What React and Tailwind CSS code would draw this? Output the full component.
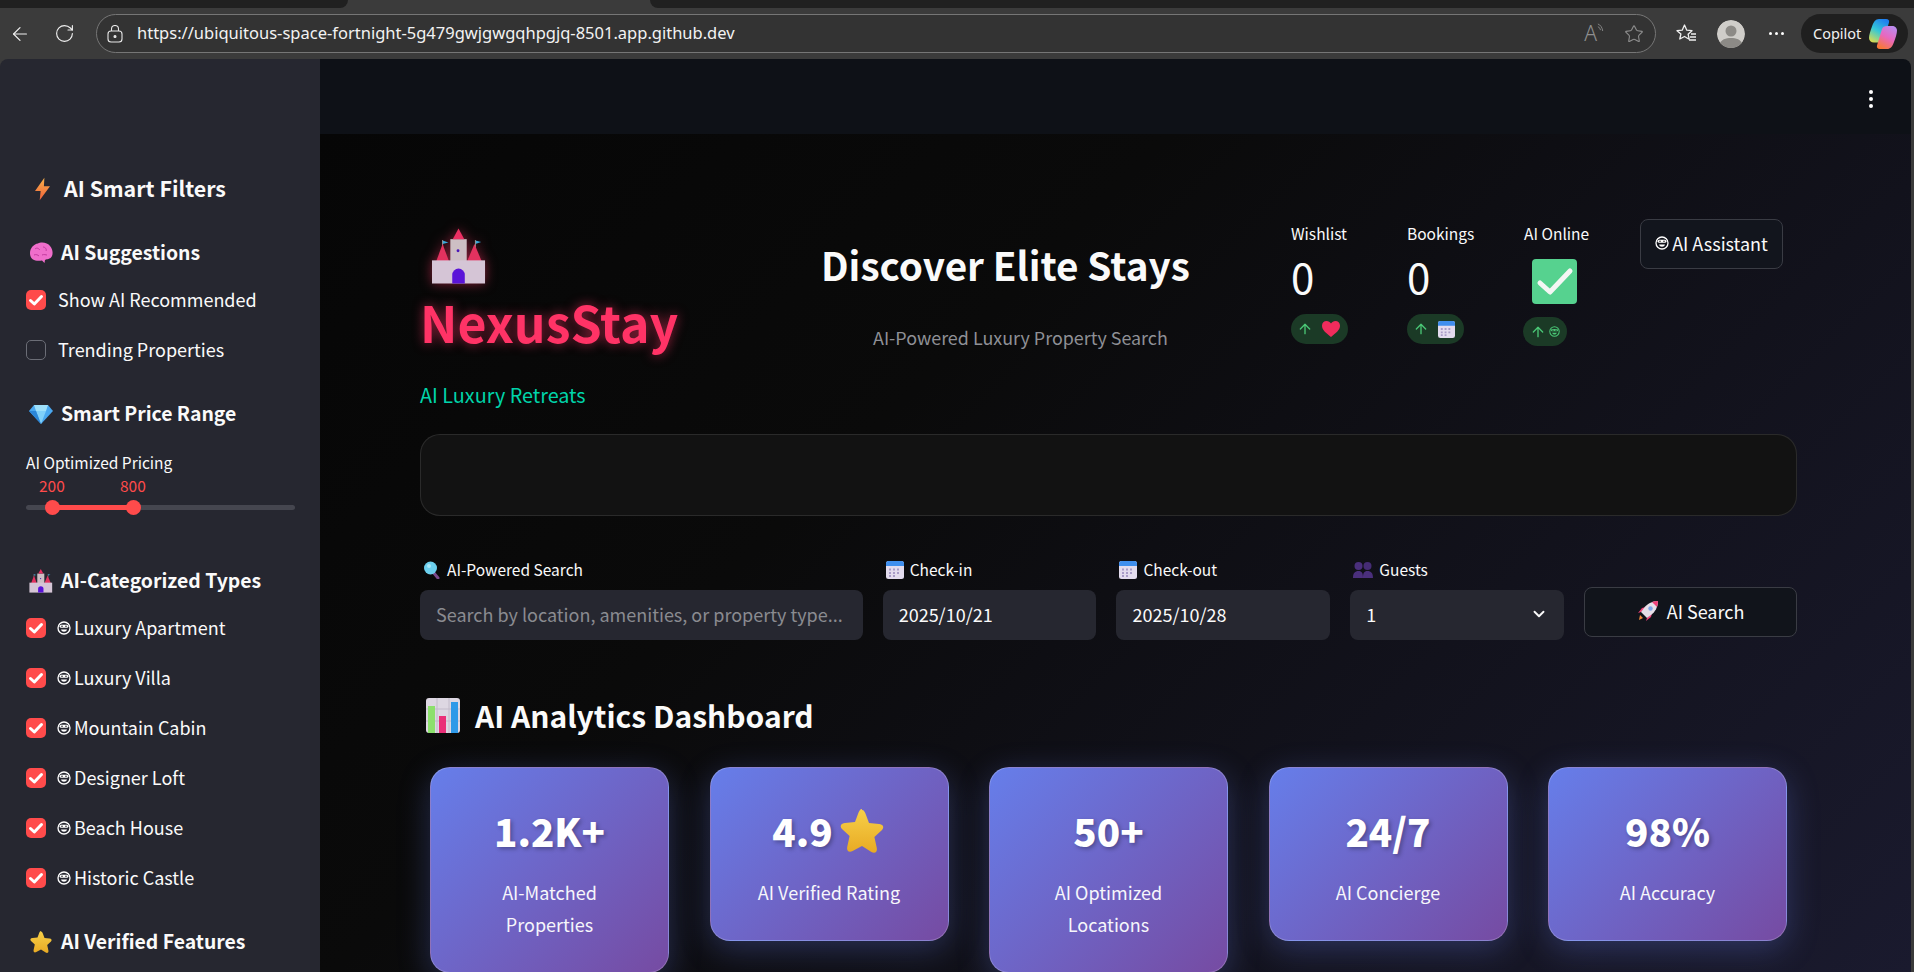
import React from 'react';
import { ArrowLeft, RotateCw, ChevronDown, Star, ArrowUp } from 'lucide-react';

const Bot = ({ className = 'w-[14px] h-[14px]', color = '#fff' }) => (
  <svg viewBox="0 0 14 14" className={className}>
    <circle cx="7" cy="7" r="6" fill="none" stroke={color} strokeWidth="1.3" />
    <rect x="2.6" y="3.8" width="8.8" height="3" rx="1.5" fill={color} />
    <circle cx="5" cy="5.3" r=".8" fill="#222" />
    <circle cx="9" cy="5.3" r=".8" fill="#222" />
    <path d="M4 8.6h6c-.4 1.5-1.6 2.2-3 2.2s-2.6-.7-3-2.2z" fill={color} />
  </svg>
);

const Castle = ({ className }) => (
  <svg viewBox="0 0 56 58" className={className}>
    <path d="M11 16l6-1.5-6-2z" fill="#38a9dc" />
    <path d="M45 16l6-2-6-1.500z" fill="#38a9dc" />
    <rect x="10.500" y="12" width="1" height="8" fill="#999" />
    <rect x="44.500" y="12" width="1" height="8" fill="#999" />
    <rect x="19" y="11" width="17" height="34" fill="#cdbfc4" />
    <path d="M27.500 0l6 11h-12z" fill="#ec2f63" />
    <path d="M11 16l7 19H4z" fill="#e2325f" />
    <path d="M44 16l8 19H36z" fill="#e2325f" />
    <rect x="0" y="33" width="55" height="24" fill="#d5c5d6" />
    <path d="M13 57v-9a6 6 0 0 1 13 0v9z" transform="translate(8 0)" fill="#5a14d8" />
    <circle cx="27" cy="23" r="1.500" fill="#4a16b8" />
  </svg>
);

const Bolt = ({ className }) => (
  <svg viewBox="0 0 16 24" className={className}>
    <defs>
      <linearGradient id="bolt" x1="0" y1="0" x2="0" y2="1">
        <stop offset="0" stopColor="#f9b24a" />
        <stop offset="1" stopColor="#f0603a" />
      </linearGradient>
    </defs>
    <path d="M10 0L0 14h6L5 24 16 9h-6.500z" fill="url(#bolt)" />
  </svg>
);

const Brain = ({ className }) => (
  <svg viewBox="0 0 24 22" className={className}>
    <path d="M1 11c0-5 4-9 8-9.500C12-.5 19 .5 21 4c3 3 3.500 9 1 11.500-2 2-5 1.500-6 2.500l-.5 3-2.500-2.500c-3 .5-7 .5-9-1C2 16 1 14 1 11z" fill="#f06ecb" />
    <path d="M6 7c2-2 4 0 5 1M14 5c2 0 4 2 3 4M5 13c2-1 4 0 5 1M13 13c2-1 4 0 5 0" stroke="#c23a9e" strokeWidth="1" fill="none" />
  </svg>
);

const Gem = ({ className }) => (
  <svg viewBox="0 0 24 20" className={className}>
    <path d="M5 1h14l5 6-12 13L0 7z" fill="#4aa8f0" />
    <path d="M7 7h10l-5 13z" fill="#7fd0fa" />
    <path d="M5 1l2 6h10l2-6z" fill="#9ee0fb" />
    <path d="M0 7h7l5 13z" fill="#2b86d8" />
  </svg>
);

const StarEmoji = ({ className }) => (
  <svg viewBox="0 0 24 24" className={className}>
    <defs>
      <linearGradient id="star" x1="0" y1="0" x2="0" y2="1">
        <stop offset="0" stopColor="#f7d048" />
        <stop offset="1" stopColor="#e8aa24" />
      </linearGradient>
    </defs>
    <path d="M12 1.500c1 0 1.500 1 2 2.500l1.500 4 5 .5c2 .2 2.800 1.500 1.500 3l-3.800 3.500 1.200 5.500c.4 2-1 3-2.700 2L12 19.500l-4.700 2.500c-1.700 1-3.100 0-2.700-2l1.200-5.500L2 11c-1.300-1.500-.5-2.800 1.500-3l5-.5 1.500-4c.5-1.500 1-2.500 2-2.500z" fill="url(#star)" />
  </svg>
);

const Calendar = ({ className }) => (
  <svg viewBox="0 0 18 18" className={className}>
    <rect x="0" y="0" width="18" height="18" rx="2.500" fill="#e3dcee" />
    <path d="M0 5V2.500A2.500 2.500 0 0 1 2.500 0h13A2.500 2.500 0 0 1 18 2.500V5z" fill="#3f8fee" />
    <path d="M3 7.500h2v2H3zM7 7.500h2v2H7zM11 7.500h2v2h-2zM3 11h2v2H3zM7 11h2v2H7zM11 11h2v2h-2zM3 14h2v2H3zM7 14h2v2H7z" fill="#a99cc8" />
  </svg>
);

const Magnifier = ({ className }) => (
  <svg viewBox="0 0 18 18" className={className}>
    <path d="M10 11l5 6" stroke="#7a4a8c" strokeWidth="3" strokeLinecap="round" />
    <circle cx="7.500" cy="7" r="6.500" fill="#6cd0ee" />
    <circle cx="6" cy="5" r="2" fill="#a8e8f8" />
  </svg>
);

const People = ({ className }) => (
  <svg viewBox="0 0 20 18" className={className}>
    <circle cx="5.500" cy="5" r="4" fill="#4a2f7c" />
    <circle cx="14.500" cy="5" r="4" fill="#452c74" />
    <path d="M0 17c0-5 2-7 5.500-7S10 12 10 17zM10 17c0-5 1-7 4.500-7S20 12 20 17z" fill="#4a2f7c" />
  </svg>
);

const Rocket = ({ className }) => (
  <svg viewBox="0 0 22 22" className={className}>
    <path d="M2 20l1-5 3 3z" fill="#f0883a" />
    <path d="M4 12L1 13l4-5 4-1zM10 18l-1 3 5-4 1-4z" fill="#f03f78" />
    <path d="M21 1c-6 0-11 3-14 7l-3 4 6 6 4-3c4-3 7-8 7-14z" fill="#e6dfe8" />
    <path d="M21 1c-2 0-4 .5-6 1l5 5c.5-2 1-4 1-6z" fill="#f03f78" />
    <circle cx="13.500" cy="8.500" r="2.200" fill="#7ea6e8" />
  </svg>
);

const ChartEmoji = ({ className }) => (
  <svg viewBox="0 0 34 35" className={className}>
    <rect width="34" height="35" rx="3" fill="#ddd7e2" />
    <path d="M11 0v35M23 0v35M0 11h34M0 23h34" stroke="#c2bbca" strokeWidth="1" />
    <rect x="2" y="8" width="7" height="27" fill="#8ce06c" />
    <rect x="13" y="18" width="7" height="17" fill="#ea2f78" />
    <rect x="25" y="4" width="7" height="31" fill="#2f9ae8" />
  </svg>
);

const Heart = ({ className }) => (
  <svg viewBox="0 0 18 16" className={className}>
    <path d="M9 16C4 12 0 9 0 4.800 0 2 2 0 4.600 0 6.400 0 8 1 9 2.500 10 1 11.600 0 13.400 0 16 0 18 2 18 4.800 18 9 14 12 9 16z" fill="#f02c5c" />
  </svg>
);

const BoxCheck = ({ className }) => (
  <svg viewBox="0 0 45 45" className={className}>
    <rect width="45" height="45" rx="4" fill="#56d28f" />
    <path d="M8 24l10 9L38 12" fill="none" stroke="#f4f6f4" strokeWidth="5" strokeLinecap="round" strokeLinejoin="round" />
  </svg>
);

const CopilotLogo = () => (
  <svg viewBox="0 0 28 30" className="w-[28px] h-[30px]">
    <defs>
      <linearGradient id="cp1" x1="0.700" y1="0" x2="0.200" y2="1">
        <stop offset="0" stopColor="#1f7ff0" />
        <stop offset="0.500" stopColor="#35c8d8" />
        <stop offset="1" stopColor="#d8dc50" />
      </linearGradient>
      <linearGradient id="cp2" x1="0.800" y1="0" x2="0.300" y2="1">
        <stop offset="0" stopColor="#b88cf0" />
        <stop offset="0.500" stopColor="#e868c0" />
        <stop offset="1" stopColor="#f87838" />
      </linearGradient>
    </defs>
    <path d="M10 0h7c2.500 0 3.500 1.500 3 3.500L15 20c-.6 2-2 3.500-4.500 3.500H5c-3 0-5-2-5-4.500 0-3 1.500-7.500 3-11.500C4.500 3 6.500 0 10 0z" fill="url(#cp1)" />
    <path d="M18 7h5c3 0 5 2 5 4.500 0 3-1.500 7.500-3 11.500-1.500 4.500-3.500 7-7 7h-7c-2.500 0-3.500-1.500-3-3.500L13 10c.5-2 2.500-3 5-3z" fill="url(#cp2)" />
  </svg>
);

const Box = ({ checked }) =>
  checked ? (
    <span className="w-5 h-5 rounded-[5px] bg-[#ff4b4b] flex items-center justify-center shrink-0">
      <svg viewBox="0 0 16 16" className="w-[16px] h-[16px]">
        <path d="M2.500 8.500l3.800 3.500 7.200-7.500" fill="none" stroke="#fff" strokeWidth="3" strokeLinecap="round" strokeLinejoin="round" />
      </svg>
    </span>
  ) : (
    <span className="w-5 h-5 rounded-[5px] border border-[#6b6d76] shrink-0" />
  );

const SideHeading = ({ icon, children, className }) => (
  <div className={`flex items-center h-7 text-[19.400px] font-semibold text-[#fafafa] ${className}`}>
    <span className="w-[35px] pl-[3px] shrink-0 flex">{icon}</span>
    <span className="-translate-y-px">{children}</span>
  </div>
);

const Option = ({ checked, bot, children }) => (
  <div className="flex items-center h-5 text-[18px] text-[#fafafa]">
    <Box checked={checked} />
    {bot ? (
      <span className="ml-[11px] mr-[3px]">
        <Bot />
      </span>
    ) : (
      <span className="w-3" />
    )}
    <span className="-translate-y-px">{children}</span>
  </div>
);

function Sidebar() {
  const types = ['Luxury Apartment', 'Luxury Villa', 'Mountain Cabin', 'Designer Loft', 'Beach House', 'Historic Castle'];
  return (
    <aside className="w-[320px] shrink-0 bg-[#262730] pl-[26px] pr-[25px] pt-[116px] rounded-tl-lg">
      <div className="flex items-center h-7 text-[21.400px] font-semibold text-[#fafafa] pl-[9px]">
        <Bolt className="w-[15px] h-6 mr-[14px]" />
        <span className="-translate-y-px">AI Smart Filters</span>
      </div>
      <SideHeading className="mt-[36px]" icon={<Brain className="w-[24px] h-[22px]" />}>
        AI Suggestions
      </SideHeading>
      <div className="mt-[23px] flex flex-col gap-[30px]">
        <Option checked>Show AI Recommended</Option>
        <Option>Trending Properties</Option>
      </div>
      <SideHeading className="mt-[40px]" icon={<Gem className="w-[24px] h-5" />}>
        Smart Price Range
      </SideHeading>
      <div className="mt-[24px] text-[15.500px] leading-5 text-[#fafafa]">AI Optimized Pricing</div>
      <div className="relative h-[39px] mt-px">
        <span className="absolute left-[13px] top-[4px] text-[15.500px] leading-4 text-[#ff4b4b]">200</span>
        <span className="absolute left-[94px] top-[4px] text-[15.500px] leading-4 text-[#ff4b4b]">800</span>
        <div className="absolute left-0 right-0 top-[32px] h-[5px] rounded-full bg-[#45464f]" />
        <div className="absolute left-[27px] w-[81px] top-[32px] h-[5px] bg-[#ff4b4b]" />
        <div className="absolute left-[19px] top-[27px] w-[15px] h-[15px] rounded-full bg-[#ff4b4b]" />
        <div className="absolute left-[100px] top-[27px] w-[15px] h-[15px] rounded-full bg-[#ff4b4b]" />
      </div>
      <SideHeading className="mt-[55px]" icon={<Castle className="w-[24px] h-[24px]" />}>
        AI-Categorized Types
      </SideHeading>
      <div className="mt-[23px] flex flex-col gap-[30px]">
        {types.map((t) => (
          <Option checked bot key={t}>
            {t}
          </Option>
        ))}
      </div>
      <SideHeading className="mt-[40px]" icon={<StarEmoji className="w-[24px] h-[24px]" />}>
        AI Verified Features
      </SideHeading>
    </aside>
  );
}

const Metric = ({ label, value, badge }) => (
  <div className="w-[116px] shrink-0 pt-[4px]">
    <div className="text-[15.500px] leading-5 text-[#fafafa]">{label}</div>
    {value}
    {badge}
  </div>
);

const Pill = ({ children, className }) => (
  <div className={`inline-flex items-center rounded-full bg-[#1b3a26] text-[#4ac776] ${className}`}>
    <ArrowUp className="w-[16px] h-[16px]" strokeWidth={2} />
    {children}
  </div>
);

function Hero() {
  return (
    <div className="flex h-[215px]">
      <div className="w-[402px] shrink-0">
        <div className="pt-[9px] pl-[12px]">
          <Castle className="w-[54px] h-[57px] [filter:drop-shadow(0_0_6px_rgba(255,51,102,0.5))]" />
        </div>
        <div className="text-[50px] leading-[64px] font-bold text-[#ff3366] mt-[4px] [text-shadow:0_0_12px_rgba(255,51,102,0.6)]">
          NexusStay
        </div>
        <div className="text-[19.800px] leading-6 text-[#00d4aa] mt-[30px]">AI Luxury Retreats</div>
      </div>
      <div className="w-[469px] shrink-0">
        <div className="text-[38.700px] leading-[48px] font-semibold text-[#fafafa] mt-[21px] -ml-px">Discover Elite Stays</div>
        <div className="text-[17.900px] leading-6 text-[#8f9096] mt-[37px] ml-[51px]">AI-Powered Luxury Property Search</div>
      </div>
      <Metric
        label="Wishlist"
        value={<div className="text-[42px] leading-[46px] text-[#fafafa] mt-[10px]">0</div>}
        badge={
          <Pill className="w-[57px] h-[30px] mt-[15px] pl-[6px] gap-[9px]">
            <Heart className="w-[18px] h-[16px]" />
          </Pill>
        }
      />
      <Metric
        label="Bookings"
        value={<div className="text-[42px] leading-[46px] text-[#fafafa] mt-[10px]">0</div>}
        badge={
          <Pill className="w-[57px] h-[30px] mt-[15px] pl-[6px] gap-[9px]">
            <Calendar className="w-[17px] h-[17px]" />
          </Pill>
        }
      />
      <div className="w-[117px] shrink-0 pt-[4px] pl-px">
        <div className="text-[15.500px] leading-5 text-[#fafafa]">AI Online</div>
        <BoxCheck className="w-[45px] h-[45px] ml-[8px] mt-[16px]" />
        <Pill className="w-[44px] h-[29px] mt-[13px] -ml-px pl-[7px] gap-[3px]">
          <Bot className="w-[11px] h-[11px]" color="#4ac776" />
        </Pill>
      </div>
      <div className="h-[50px] w-[143px] rounded-lg border border-[#3a3c44] bg-[#12151d] flex items-center justify-center gap-[3px] text-[18px] pb-[2px] text-[#fafafa]">
        <Bot />
        AI Assistant
      </div>
    </div>
  );
}

const Field = ({ label, icon, className, children }) => (
  <div className={className}>
    <div className="flex items-center h-5 gap-[6px] text-[15.500px] text-[#fafafa] mb-[10px] pl-[3px]">
      {icon}
      {label}
    </div>
    <div className="h-[50px] rounded-lg bg-[#262730] flex items-center justify-between px-4 pb-[2px] text-[18px] text-[#fafafa]">
      {children}
    </div>
  </div>
);

const stats = [
  { value: '1.2K+', label: ['AI-Matched', 'Properties'] },
  { value: '4.9', star: true, label: ['AI Verified Rating'] },
  { value: '50+', label: ['AI Optimized', 'Locations'] },
  { value: '24/7', label: ['AI Concierge'] },
  { value: '98%', label: ['AI Accuracy'] },
];

function StatCard({ stat }) {
  return (
    <div className="w-[239px] shrink-0 self-start rounded-[20px] border border-white/20 bg-linear-[135deg,#667eea,#764ba2] text-center text-white pt-[28px] pb-[32px] shadow-[0_8px_32px_rgba(102,126,234,0.3)]">
      <div className="flex items-center justify-center gap-[5px] h-[70px] text-[38.500px] font-black [text-shadow:2px_2px_4px_rgba(0,0,0,0.3)]">
        {stat.value}
        {stat.star && <StarEmoji className="w-[48px] h-[48px]" />}
      </div>
      <div className="text-[18px] leading-[32px] mt-[10px] text-[#f6f6fb]">
        {stat.label.map((l) => (
          <div key={l}>{l}</div>
        ))}
      </div>
    </div>
  );
}

function Main() {
  return (
    <main className="flex-1 min-w-0 flex flex-col bg-[#0e1117] rounded-tr-lg overflow-hidden">
      <div className="h-[75px] shrink-0 flex justify-end pr-[38px] pt-[31px]">
        <div className="flex flex-col gap-[3px]">
          <span className="w-[4px] h-[4px] rounded-full bg-white" />
          <span className="w-[4px] h-[4px] rounded-full bg-white" />
          <span className="w-[4px] h-[4px] rounded-full bg-white" />
        </div>
      </div>
      <div className="flex-1 min-h-0 pl-[100px] pr-[114px] pt-[85px] bg-linear-[135deg,#060606_0%,#0a0a0a_35%,#1a1a2e_100%]">
        <Hero />
        <div className="h-[82px] rounded-[20px] border border-white/10 bg-[#121212]" />
        <div className="flex gap-[20px] mt-[44px] items-start">
          <Field className="w-[443px]" label="AI-Powered Search" icon={<Magnifier className="w-[18px] h-[18px]" />}>
            <span className="text-[#8a8b90] whitespace-nowrap">Search by location, amenities, or property type...</span>
          </Field>
          <Field className="w-[214px]" label="Check-in" icon={<Calendar className="w-[18px] h-[18px]" />}>
            2025/10/21
          </Field>
          <Field className="w-[214px]" label="Check-out" icon={<Calendar className="w-[18px] h-[18px]" />}>
            2025/10/28
          </Field>
          <Field className="w-[214px]" label="Guests" icon={<People className="w-[20px] h-[18px]" />}>
            1
            <ChevronDown className="w-[18px] h-[18px] text-[#fafafa]" strokeWidth={2.5} />
          </Field>
          <div className="w-[213px] h-[50px] mt-[27px] rounded-lg border border-[#3a3c44] bg-[#11141b] flex items-center justify-center gap-[8px] pb-[2px] text-[18px] text-[#fafafa]">
            <Rocket className="w-[22px] h-[22px]" />
            AI Search
          </div>
        </div>
        <div className="flex items-center h-[36px] mt-[57px] pl-[6px] gap-[15px] text-[30px] font-semibold text-[#fafafa]">
          <ChartEmoji className="w-[34px] h-[35px]" />
          AI Analytics Dashboard
        </div>
        <div className="flex justify-between pl-[10px] pr-[10px] mt-[34px]">
          {stats.map((s) => (
            <StatCard stat={s} key={s.value} />
          ))}
        </div>
      </div>
    </main>
  );
}

function BrowserBar() {
  return (
    <div className="h-[59px] shrink-0 bg-[#3b3b3b] flex flex-col">
      <div className="h-2 flex">
        <div className="w-[348px] bg-[#202020] rounded-br-lg" />
        <div className="w-[302px]" />
        <div className="flex-1 bg-[#202020] rounded-bl-lg" />
      </div>
      <div className="h-[39px] mt-[6px] flex items-center text-[#f0f0f0]">
        <ArrowLeft className="w-[22px] h-[22px] ml-[9px]" strokeWidth={1.3} />
        <RotateCw className="w-[21px] h-[21px] ml-[23px]" strokeWidth={1.3} />
        <div className="ml-[21px] w-[1560px] h-[39px] rounded-full border border-[#767676] bg-[#333333] flex items-center pl-[10px] pr-[11px]">
          <svg viewBox="0 0 16 18" className="w-[16px] h-[18px]" fill="none" stroke="#e8e8e8" strokeWidth="1.1">
            <rect x="1" y="6" width="14" height="11" rx="3" />
            <path d="M4.500 6V4a3.500 3.500 0 0 1 7 0v2" />
            <circle cx="8" cy="11.500" r="1" fill="#e8e8e8" />
          </svg>
          <span className="ml-[14px] text-[16.500px] font-['Noto_Sans',sans-serif] text-[#f2f2f2]">
            https://ubiquitous-space-fortnight-5g479gwjgwgqhpgjq-8501.app.github.dev
          </span>
          <span className="ml-auto flex items-center gap-[20px] text-[#8f8f8f]">
            <span className="flex items-start">
              <span className="text-[21px] leading-none font-['Noto_Sans',sans-serif] font-light">A</span>
              <svg viewBox="0 0 8 10" className="w-[7px] h-[9px]" fill="none" stroke="#8f8f8f" strokeWidth="1">
                <path d="M1 1c3 1 5 4 5.500 8M1 4c1.500.7 2.500 2 3 4" />
              </svg>
            </span>
            <Star className="w-[20px] h-[20px]" strokeWidth={1.3} />
          </span>
        </div>
        <svg viewBox="0 0 22 22" className="w-[22px] h-[22px] ml-[19px]" fill="none" stroke="#f0f0f0" strokeWidth="1.300" strokeLinejoin="round">
          <path d="M9.500 2l2.300 5.200 5.200.5-3.900 3.500 1.100 5-4.700-2.700L4.800 16l1.100-5L2 7.700l5.200-.5z" />
          <path d="M16 11h5M15 14h6M14 17h7" />
        </svg>
        <svg viewBox="0 0 28 28" className="w-[28px] h-[28px] ml-[20px] rounded-full">
          <circle cx="14" cy="14" r="14" fill="#cfcdc9" />
          <circle cx="14" cy="11" r="5.500" fill="#8c8a86" />
          <path d="M2 25c2-6 7-7 12-7s10 1 12 7c-6 5-18 5-24 0z" fill="#8c8a86" />
        </svg>
        <div className="ml-[24px] flex gap-[3px]">
          <span className="w-[3px] h-[3px] rounded-full bg-white" />
          <span className="w-[3px] h-[3px] rounded-full bg-white" />
          <span className="w-[3px] h-[3px] rounded-full bg-white" />
        </div>
        <div className="ml-[17px] w-[107px] h-[39px] rounded-full bg-[#1f1f1f] flex items-center pl-[12px] gap-[8px] text-[14.500px] font-['Noto_Sans',sans-serif]">
          Copilot
          <CopilotLogo />
        </div>
      </div>
    </div>
  );
}

export default function App() {
  return (
    <div className="h-screen w-[1914px] overflow-hidden flex flex-col bg-[#3b3b3b] font-['Noto_Sans_CJK_SC','Noto_Sans',sans-serif]">
      <BrowserBar />
      <div className="flex-1 min-h-0 flex pr-[3px]">
        <Sidebar />
        <Main />
      </div>
    </div>
  );
}
